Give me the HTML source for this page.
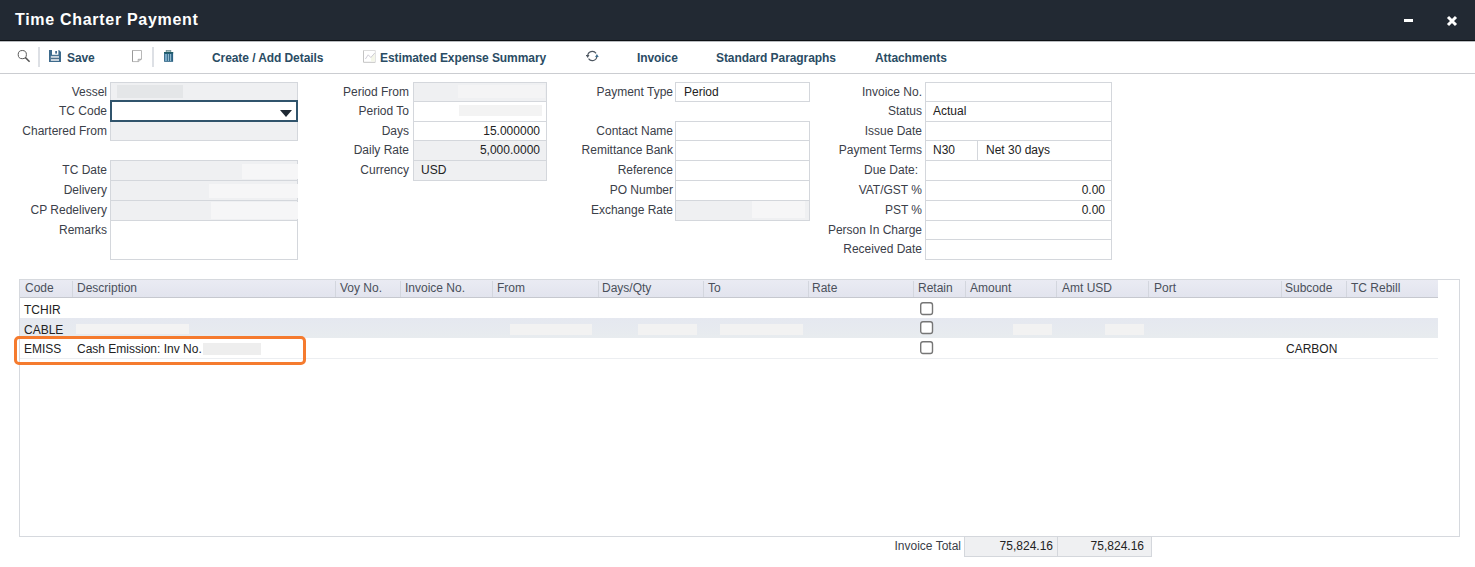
<!DOCTYPE html>
<html><head><meta charset="utf-8"><style>
*{box-sizing:border-box;margin:0;padding:0}
html,body{width:1475px;height:567px;overflow:hidden;background:#fff;font-family:"Liberation Sans",sans-serif;font-size:12px;color:#333}
.a{position:absolute}
.lbl{position:absolute;white-space:nowrap;text-align:right;color:#3b4049;line-height:14px}
.f{position:absolute;border:1px solid #d4d7dc;background:#fff;color:#222;white-space:nowrap}
.g{background:#eff0f2}
.ft{position:absolute;white-space:nowrap;color:#222;line-height:14px}
.tbt{position:absolute;font-weight:bold;font-size:12px;color:#2a4c64;white-space:nowrap;line-height:14px;letter-spacing:-0.08px}
.sep{position:absolute;width:2px;background:#dde0e5}
.th{position:absolute;white-space:nowrap;color:#4a505b;line-height:14px}
.td{position:absolute;white-space:nowrap;color:#222;line-height:14px}
.cb{position:absolute;width:13px;height:13px;border:1.5px solid #7a7a7a;border-radius:2.5px;background:#fff}
</style></head><body>
<div class="a" style="left:0;top:0;width:1475px;height:40px;background:#222933"></div>
<div class="a" style="left:0;top:40px;width:1475px;height:1px;background:#0d1014"></div>
<div class="a" style="left:0;top:41px;width:1475px;height:1px;background:#b9bcc0"></div>
<div class="a" style="left:15px;top:11px;color:#fff;font-weight:bold;font-size:16px;letter-spacing:0.7px;white-space:nowrap;line-height:18px">Time Charter Payment</div>
<div class="a" style="left:1404px;top:19px;width:9px;height:3px;background:#fff"></div>
<svg class="a" style="left:1446px;top:15px" width="12" height="12" viewBox="0 0 12 12"><path d="M2 2L10 10M10 2L2 10" stroke="#fff" stroke-width="3"/></svg>
<div class="a" style="left:0;top:73px;width:1475px;height:1px;background:#cbcdd1"></div>
<svg class="a" style="left:16px;top:48px" width="16" height="16" viewBox="0 0 16 16"><circle cx="6.3" cy="6.6" r="4.1" fill="none" stroke="#5a5a5a" stroke-width="1"/><path d="M9.2 9.4L13.6 13.8" stroke="#555" stroke-width="1.5"/></svg>
<div class="sep" style="left:38px;top:47px;height:20px"></div>
<svg class="a" style="left:49px;top:50px" width="12" height="12" viewBox="0 0 12 12"><path d="M0 0H10L12 2V12H0Z" fill="#3d6a8c"/><rect x="3" y="0" width="6.4" height="4.8" fill="#fff"/><rect x="6.3" y="1" width="1.6" height="2.6" fill="#2f5a80"/><rect x="1.8" y="5.9" width="8.2" height="5.1" fill="#c9d3dc"/><rect x="1.8" y="7.9" width="8.2" height="1.1" fill="#50708a"/></svg>
<div class="tbt" style="left:67px;top:50.5px">Save</div>
<svg class="a" style="left:132px;top:50px" width="11" height="13" viewBox="0 0 11 13"><path d="M0.5 0.5H9.5V9L6.5 11.6H0.5Z" fill="#fff" stroke="#b0b0b0" stroke-width="0.9"/><path d="M0.5 0.5V11.6" stroke="#9a9a9a" stroke-width="1"/><path d="M6.2 11.6V9.3H9.5" fill="none" stroke="#9c9c9c" stroke-width="0.9"/></svg>
<div class="sep" style="left:152px;top:47px;height:20px"></div>
<svg class="a" style="left:163px;top:50px" width="11" height="13" viewBox="0 0 11 13"><rect x="3.2" y="0.4" width="4.6" height="1.5" fill="#d8eeee" stroke="#6c8a8e" stroke-width="0.8"/><rect x="1.1" y="2.2" width="9" height="9.6" fill="#2a6183"/><rect x="1" y="2" width="9.2" height="1.4" fill="#1f5c66"/><rect x="2.1" y="4" width="1.8" height="7" fill="#7fb0cc"/><rect x="4.8" y="4" width="1.2" height="7" fill="#8fb8cc"/><rect x="6.9" y="4" width="1.3" height="7" fill="#8fb8cc"/></svg>
<div class="tbt" style="left:212px;top:50.5px">Create / Add Details</div>
<svg class="a" style="left:363px;top:50px" width="13" height="13" viewBox="0 0 13 13"><path d="M0.5 0.5H12.3V12.3" fill="none" stroke="#dcdcdc" stroke-width="1"/><path d="M0.5 0.5V12.3H12.3" fill="none" stroke="#c4c4c4" stroke-width="1"/><path d="M7.8 7.5L11.8 3V11.5H8Z" fill="#f4f6e8"/><path d="M2.4 9L5.2 4.8L7.8 7.5L11.8 3" fill="none" stroke="#c8c6d0" stroke-width="0.9"/></svg>
<div class="tbt" style="left:380px;top:50.5px">Estimated Expense Summary</div>
<svg class="a" style="left:586px;top:50px" width="13" height="12" viewBox="0 0 13 12"><path d="M10.07 3.36A4.6 4.6 0 0 0 1.7 6" fill="none" stroke="#4e5761" stroke-width="1.1"/><path d="M2.53 8.64A4.6 4.6 0 0 0 10.9 6.2" fill="none" stroke="#4e5761" stroke-width="1.1"/><path d="M-0.1 5.0L3.5 5.0L1.7 8.0Z" fill="#4e5761"/><path d="M9.1 7.0L12.7 7.0L10.9 4.0Z" fill="#3d6d8d"/></svg>
<div class="tbt" style="left:637px;top:50.5px">Invoice</div>
<div class="tbt" style="left:716px;top:50.5px">Standard Paragraphs</div>
<div class="tbt" style="left:875px;top:50.5px">Attachments</div>
<div class="lbl" style="right:1368px;top:85px">Vessel</div>
<div class="lbl" style="right:1368px;top:104px">TC Code</div>
<div class="lbl" style="right:1368px;top:124px">Chartered From</div>
<div class="lbl" style="right:1368px;top:163px">TC Date</div>
<div class="lbl" style="right:1368px;top:183px">Delivery</div>
<div class="lbl" style="right:1368px;top:203px">CP Redelivery</div>
<div class="lbl" style="right:1368px;top:223px">Remarks</div>
<div class="f g" style="left:110px;top:82px;width:188px;height:20px;"></div>
<div class="f g" style="left:110px;top:121px;width:188px;height:20px;"></div>
<div class="a" style="left:110px;top:100px;width:188px;height:22px;border:2px solid #30546c;background:#fff"></div>
<svg class="a" style="left:280px;top:110px" width="12" height="7" viewBox="0 0 12 7"><path d="M0 0H12L6 7Z" fill="#1e2933"/></svg>
<div class="f g" style="left:110px;top:160px;width:188px;height:21px;"></div>
<div class="f g" style="left:110px;top:180px;width:188px;height:21px;"></div>
<div class="f g" style="left:110px;top:200px;width:188px;height:21px;"></div>
<div class="f" style="left:110px;top:220px;width:188px;height:40px;"></div>
<div class="lbl" style="right:1066px;top:85px">Period From</div>
<div class="lbl" style="right:1066px;top:104px">Period To</div>
<div class="lbl" style="right:1066px;top:124px">Days</div>
<div class="lbl" style="right:1066px;top:143px">Daily Rate</div>
<div class="lbl" style="right:1066px;top:163px">Currency</div>
<div class="f g" style="left:413px;top:82px;width:134px;height:20px;"></div>
<div class="f" style="left:413px;top:101px;width:134px;height:21px;"></div>
<div class="f" style="left:413px;top:121px;width:134px;height:20px;"></div>
<div class="f g" style="left:413px;top:140px;width:134px;height:21px;"></div>
<div class="f g" style="left:413px;top:160px;width:134px;height:21px;"></div>
<div class="ft" style="right:935px;top:124px">15.000000</div>
<div class="ft" style="right:935px;top:143px">5,000.0000</div>
<div class="ft" style="left:421px;top:163px">USD</div>
<div class="lbl" style="right:802px;top:85px">Payment Type</div>
<div class="lbl" style="right:802px;top:124px">Contact Name</div>
<div class="lbl" style="right:802px;top:143px">Remittance Bank</div>
<div class="lbl" style="right:802px;top:163px">Reference</div>
<div class="lbl" style="right:802px;top:183px">PO Number</div>
<div class="lbl" style="right:802px;top:203px">Exchange Rate</div>
<div class="f" style="left:675px;top:82px;width:135px;height:20px;"></div>
<div class="f" style="left:675px;top:121px;width:135px;height:20px;"></div>
<div class="f" style="left:675px;top:140px;width:135px;height:21px;"></div>
<div class="f" style="left:675px;top:160px;width:135px;height:21px;"></div>
<div class="f" style="left:675px;top:180px;width:135px;height:21px;"></div>
<div class="f g" style="left:675px;top:200px;width:135px;height:21px;"></div>
<div class="ft" style="left:684px;top:85px">Period</div>
<div class="lbl" style="right:553px;top:85px">Invoice No.</div>
<div class="lbl" style="right:553px;top:104px">Status</div>
<div class="lbl" style="right:553px;top:124px">Issue Date</div>
<div class="lbl" style="right:553px;top:143px">Payment Terms</div>
<div class="lbl" style="right:557px;top:163px">Due Date:</div>
<div class="lbl" style="right:553px;top:183px">VAT/GST %</div>
<div class="lbl" style="right:553px;top:203px">PST %</div>
<div class="lbl" style="right:553px;top:223px">Person In Charge</div>
<div class="lbl" style="right:553px;top:242px">Received Date</div>
<div class="f" style="left:925px;top:82px;width:187px;height:20px;"></div>
<div class="f" style="left:925px;top:101px;width:187px;height:21px;"></div>
<div class="f" style="left:925px;top:121px;width:187px;height:20px;"></div>
<div class="f" style="left:925px;top:140px;width:187px;height:21px;"></div>
<div class="f" style="left:925px;top:160px;width:187px;height:21px;"></div>
<div class="f" style="left:925px;top:180px;width:187px;height:21px;"></div>
<div class="f" style="left:925px;top:200px;width:187px;height:21px;"></div>
<div class="f" style="left:925px;top:220px;width:187px;height:20px;"></div>
<div class="f" style="left:925px;top:239px;width:187px;height:21px;"></div>
<div class="a" style="left:977px;top:140px;width:1px;height:20px;background:#d4d7dc"></div>
<div class="ft" style="left:933px;top:104px">Actual</div>
<div class="ft" style="left:933px;top:143px">N30</div>
<div class="ft" style="left:986px;top:143px">Net 30 days</div>
<div class="ft" style="right:370px;top:183px">0.00</div>
<div class="ft" style="right:370px;top:203px">0.00</div>
<div class="a" style="left:19px;top:279px;width:1441px;height:258px;border:1px solid #d6d9de;background:#fff"></div>
<div class="a" style="left:20px;top:280px;width:1418px;height:18px;background:linear-gradient(#eaebf3,#e2e4ee);border-bottom:1px solid #c6c8cf"></div>
<div class="a" style="left:72px;top:281px;width:1px;height:16px;background:#d3d6de"></div>
<div class="a" style="left:335px;top:281px;width:1px;height:16px;background:#d3d6de"></div>
<div class="a" style="left:400px;top:281px;width:1px;height:16px;background:#d3d6de"></div>
<div class="a" style="left:492px;top:281px;width:1px;height:16px;background:#d3d6de"></div>
<div class="a" style="left:598px;top:281px;width:1px;height:16px;background:#d3d6de"></div>
<div class="a" style="left:703px;top:281px;width:1px;height:16px;background:#d3d6de"></div>
<div class="a" style="left:808px;top:281px;width:1px;height:16px;background:#d3d6de"></div>
<div class="a" style="left:913px;top:281px;width:1px;height:16px;background:#d3d6de"></div>
<div class="a" style="left:965px;top:281px;width:1px;height:16px;background:#d3d6de"></div>
<div class="a" style="left:1056px;top:281px;width:1px;height:16px;background:#d3d6de"></div>
<div class="a" style="left:1148px;top:281px;width:1px;height:16px;background:#d3d6de"></div>
<div class="a" style="left:1281px;top:281px;width:1px;height:16px;background:#d3d6de"></div>
<div class="a" style="left:1346px;top:281px;width:1px;height:16px;background:#d3d6de"></div>
<div class="th" style="left:25px;top:281px">Code</div>
<div class="th" style="left:77px;top:281px">Description</div>
<div class="th" style="left:340px;top:281px">Voy No.</div>
<div class="th" style="left:405px;top:281px">Invoice No.</div>
<div class="th" style="left:497px;top:281px">From</div>
<div class="th" style="left:602px;top:281px">Days/Qty</div>
<div class="th" style="left:708px;top:281px">To</div>
<div class="th" style="left:812px;top:281px">Rate</div>
<div class="th" style="left:918px;top:281px">Retain</div>
<div class="th" style="left:970px;top:281px">Amount</div>
<div class="th" style="left:1062px;top:281px">Amt USD</div>
<div class="th" style="left:1154px;top:281px">Port</div>
<div class="th" style="left:1285px;top:281px">Subcode</div>
<div class="th" style="left:1351px;top:281px">TC Rebill</div>
<div class="a" style="left:20px;top:318px;width:1418px;height:20px;background:linear-gradient(#e5e8f0,#e8ecef)"></div>
<div class="a" style="left:20px;top:358px;width:1418px;height:1px;background:#eceef1"></div>
<div class="td" style="left:24px;top:303px">TCHIR</div>
<div class="td" style="left:24px;top:323px">CABLE</div>
<div class="td" style="left:24px;top:342px">EMISS</div>
<div class="td" style="left:77px;top:342px">Cash Emission: Inv No.</div>
<div class="a" style="left:203px;top:343px;width:58px;height:12px;background:#eeeeee;filter:blur(0.5px)"></div>
<div class="td" style="left:1286px;top:342px">CARBON</div>
<svg class="a" style="left:920px;top:302px" width="14" height="14" viewBox="0 0 14 14"><rect x="0.7" y="0.7" width="11.8" height="11.8" rx="2.2" fill="#fff" stroke="#767676" stroke-width="1.4"/></svg>
<svg class="a" style="left:920px;top:321px" width="14" height="14" viewBox="0 0 14 14"><rect x="0.7" y="0.7" width="11.8" height="11.8" rx="2.2" fill="#fff" stroke="#767676" stroke-width="1.4"/></svg>
<svg class="a" style="left:920px;top:341px" width="14" height="14" viewBox="0 0 14 14"><rect x="0.7" y="0.7" width="11.8" height="11.8" rx="2.2" fill="#fff" stroke="#767676" stroke-width="1.4"/></svg>
<div class="a" style="left:14px;top:336px;width:292px;height:29px;border:3px solid #f57b2e;border-radius:5px"></div>
<div class="a" style="left:117px;top:85px;width:66px;height:13px;background:#e4e6e8;filter:blur(0.6px)"></div>
<div class="a" style="left:458px;top:85px;width:87px;height:13px;background:#f4f4f5;filter:blur(0.6px)"></div>
<div class="a" style="left:459px;top:105px;width:83px;height:11px;background:#f3f3f3;filter:blur(0.6px)"></div>
<div class="a" style="left:242px;top:164px;width:56px;height:15px;background:#f6f6f7;filter:blur(0.6px)"></div>
<div class="a" style="left:209px;top:184px;width:89px;height:14px;background:#f6f6f7;filter:blur(0.6px)"></div>
<div class="a" style="left:211px;top:202px;width:87px;height:17px;background:#f6f6f7;filter:blur(0.6px)"></div>
<div class="a" style="left:752px;top:201px;width:53px;height:17px;background:#f6f6f7;filter:blur(0.6px)"></div>
<div class="a" style="left:76px;top:324px;width:113px;height:10px;background:#f3f3f3;filter:blur(0.6px)"></div>
<div class="a" style="left:510px;top:324px;width:82px;height:11px;background:#f2f2f2;filter:blur(0.6px)"></div>
<div class="a" style="left:638px;top:324px;width:59px;height:11px;background:#f2f2f2;filter:blur(0.6px)"></div>
<div class="a" style="left:720px;top:324px;width:83px;height:11px;background:#f2f2f2;filter:blur(0.6px)"></div>
<div class="a" style="left:1013px;top:324px;width:39px;height:11px;background:#f2f2f2;filter:blur(0.6px)"></div>
<div class="a" style="left:1105px;top:324px;width:39px;height:11px;background:#f2f2f2;filter:blur(0.6px)"></div>
<div class="lbl" style="right:514px;top:539px">Invoice Total</div>
<div class="f g" style="left:964px;top:536px;width:94px;height:21px"></div>
<div class="f g" style="left:1057px;top:536px;width:95px;height:21px"></div>
<div class="ft" style="right:422px;top:539px">75,824.16</div>
<div class="ft" style="right:331px;top:539px">75,824.16</div>
</body></html>
